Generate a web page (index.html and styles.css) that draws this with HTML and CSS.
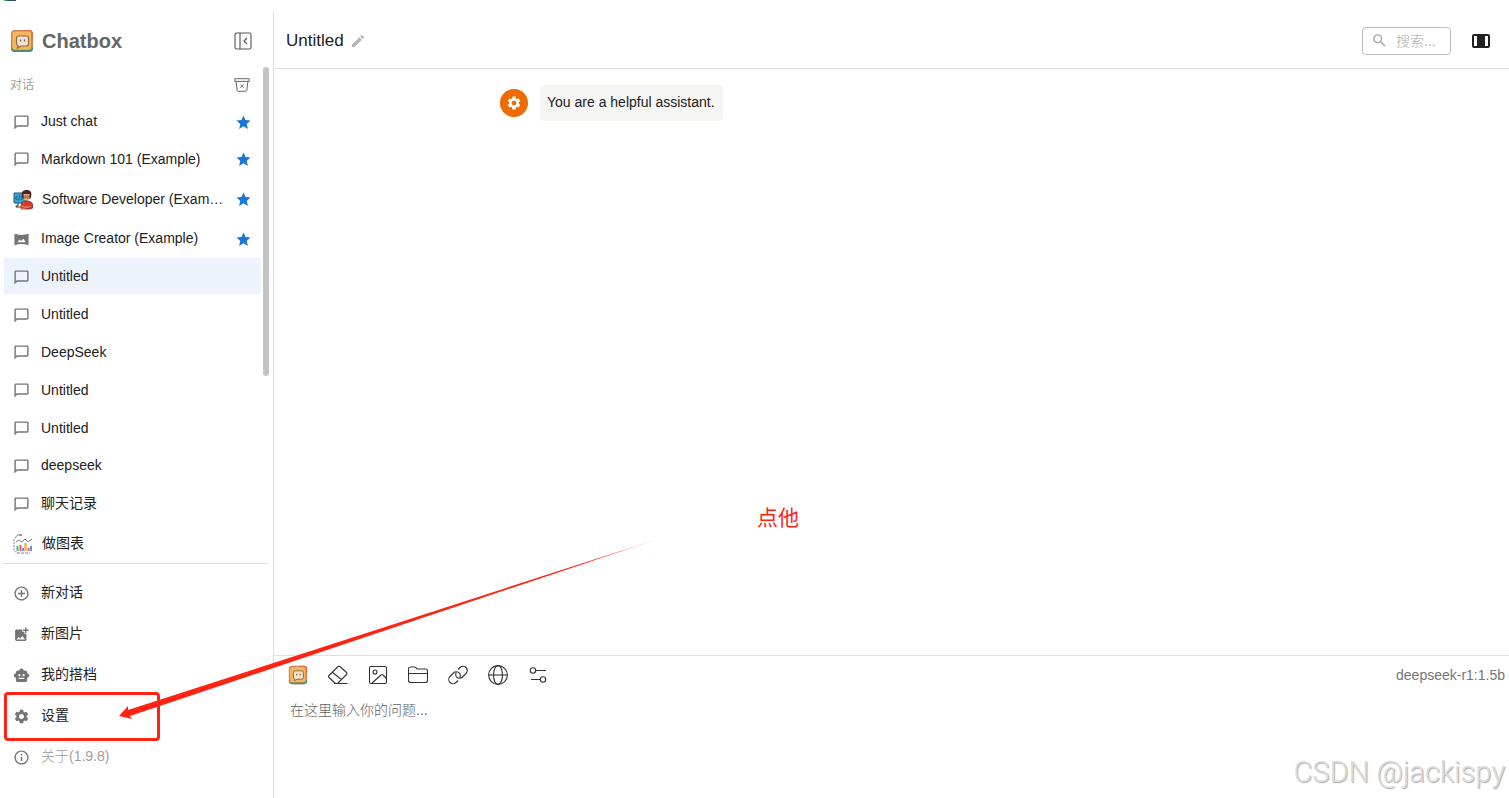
FILE: index.html
```html
<!DOCTYPE html>
<html lang="zh-CN">
<head>
    <meta charset="UTF-8">
    <meta name="viewport" content="width=device-width, initial-scale=1.0">
    <title>Chatbox</title>
    <link rel="stylesheet" href="styles.css">
</head>
<body>
<svg class="sprite" aria-hidden="true">
    <symbol id="i-chat" viewBox="0 0 24 24"><path d="M20 2H4c-1.100 0-2 .9-2 2v18l4-4h14c1.100 0 2-.9 2-2V4c0-1.100-.9-2-2-2zm0 14H5.200L4 17.200V4h16v12z"/></symbol>
    <symbol id="i-star" viewBox="0 0 24 24"><path d="M12 17.270 18.180 21l-1.640-7.030L22 9.240l-7.190-.61L12 2 9.190 8.630 2 9.240l5.460 4.730L5.820 21z"/></symbol>
    <symbol id="i-gear" viewBox="0 0 24 24"><path d="M19.140 12.940c.04-.3.060-.61.060-.94 0-.32-.02-.64-.07-.94l2.030-1.580c.18-.14.230-.41.120-.61l-1.920-3.320c-.12-.22-.37-.29-.59-.22l-2.390.96c-.5-.38-1.030-.7-1.620-.94l-.36-2.540c-.04-.24-.24-.41-.48-.41h-3.840c-.24 0-.43.170-.47.410l-.36 2.540c-.59.240-1.130.570-1.620.940l-2.390-.96c-.22-.08-.47 0-.59.220L2.740 8.870c-.12.210-.08.470.120.610l2.030 1.580c-.05.3-.09.630-.09.940s.02.640.070.940l-2.030 1.580c-.18.140-.23.410-.12.610l1.920 3.320c.12.220.370.290.590.220l2.390-.96c.5.380 1.030.7 1.620.940l.36 2.540c.05.240.240.410.480.410h3.840c.24 0 .44-.17.470-.41l.36-2.540c.59-.24 1.130-.56 1.620-.94l2.390.96c.22.080.470 0 .59-.22l1.920-3.320c.12-.22.070-.47-.12-.61l-2.010-1.580zM12 15.600c-1.980 0-3.600-1.620-3.600-3.600s1.620-3.600 3.600-3.600 3.600 1.620 3.600 3.600-1.620 3.600-3.600 3.600z"/></symbol>
    <symbol id="i-logo" viewBox="0 0 24 24">
        <rect x="1" y="1" width="22" height="22" rx="4" fill="#cf8a55"/>
        <path d="M1 18h11v5H5a4 4 0 0 1-4-4z" fill="#3d9b68"/>
        <path d="M12 18h11v1a4 4 0 0 1-4 4h-7z" fill="#2f939c"/>
        <path d="M14 1h5a4 4 0 0 1 4 4v5h-9z" fill="#dc6b4a"/>
        <rect x="2" y="2" width="19.500" height="19" rx="2.500" fill="#f6b660" stroke="#b5764a" stroke-width=".6"/>
        <path d="M8.500 7h8a2 2 0 0 1 2 2v6a2 2 0 0 1-2 2H11l-3.500 2 .5-2.500a2 2 0 0 1-1.500-2V9a2 2 0 0 1 2-2z" fill="#f3e3c8" stroke="#8a6852" stroke-width="1.200"/>
        <path d="M10.500 10.500v2M14.500 10.500v2" stroke="#735345" stroke-width="1.200"/>
    </symbol>
</svg>

<div class="window-strip"><span class="window-icon"></span></div>

<div class="app">
    <aside class="sidebar">
        <div class="brand">
            <svg class="logo"><use href="#i-logo"/></svg>
            <h1>Chatbox</h1>
            <button type="button" class="icon-btn" aria-label="收起侧边栏">
                <svg class="line-icon small" viewBox="0 0 20 20"><rect x="2" y="2" width="16" height="16" rx="1.500"/><path d="M7 2v16M14 7l-3 3 3 3"/></svg>
            </button>
        </div>
        <div class="list-head">
            <span>对话</span>
            <button type="button" class="icon-btn" aria-label="清理对话">
                <svg class="line-icon small muted" viewBox="0 0 20 20"><path d="M2 3h16v3H2zM3.500 6l1 9.500q.2 1.500 1.500 1.500h8q1.300 0 1.500-1.500l1-9.500M8.300 9.500l3.400 3.500M11.700 9.500 8.300 13"/></svg>
            </button>
        </div>
        <ul class="sessions">
            <li class="row"><svg class="row-icon"><use href="#i-chat"/></svg><span class="name">Just chat</span><svg class="star"><use href="#i-star"/></svg></li>
            <li class="row"><svg class="row-icon"><use href="#i-chat"/></svg><span class="name">Markdown 101 (Example)</span><svg class="star"><use href="#i-star"/></svg></li>
            <li class="row with-avatar">
                <svg class="avatar" viewBox="0 0 20 20">
                    <path d="M1 3h12v10H1z" fill="#35a4d4" stroke="#205b76"/>
                    <path d="M4 6 2.500 8 4 10M6.500 5.500l-1 5M8 6l1.500 2L8 10" fill="none" stroke="#174660" stroke-width=".8"/>
                    <path d="M5 13v3H3v1h6" stroke="#26323b" fill="none"/>
                    <path d="M9 6C8 2 10 0 14 0c4 0 5 3 4 7l-1 2h-7z" fill="#47241d"/>
                    <path d="M10.500 4h6V9q-3 4-6 0z" fill="#f0a880"/>
                    <path d="M10 6h3v2h-3zM14 6h3v2h-3z" fill="none" stroke="#3b2929" stroke-width=".5"/>
                    <path d="M8 19c0-6 1-8 5-8s7 1 7 6c0 2-3 2-5 2z" fill="#e3372e" stroke="#512c2b" stroke-width=".7"/>
                    <path d="m7 16 9 1.500M8 19l10-3" stroke="#da8360" stroke-width="1"/>
                </svg>
                <span class="name">Software Developer (Exam…</span><svg class="star"><use href="#i-star"/></svg>
            </li>
            <li class="row"><svg class="row-icon" viewBox="0 0 24 24"><path fill-rule="evenodd" d="M2 4c7 2 13 2 20 0v16c-7-2-13-2-20 0zm4 12h12l-3.500-5-3 3-2-2z"/></svg><span class="name">Image Creator (Example)</span><svg class="star"><use href="#i-star"/></svg></li>
            <li class="row selected"><svg class="row-icon"><use href="#i-chat"/></svg><span class="name">Untitled</span></li>
            <li class="row"><svg class="row-icon"><use href="#i-chat"/></svg><span class="name">Untitled</span></li>
            <li class="row"><svg class="row-icon"><use href="#i-chat"/></svg><span class="name">DeepSeek</span></li>
            <li class="row"><svg class="row-icon"><use href="#i-chat"/></svg><span class="name">Untitled</span></li>
            <li class="row"><svg class="row-icon"><use href="#i-chat"/></svg><span class="name">Untitled</span></li>
            <li class="row"><svg class="row-icon"><use href="#i-chat"/></svg><span class="name">deepseek</span></li>
            <li class="row"><svg class="row-icon"><use href="#i-chat"/></svg><span class="name">聊天记录</span></li>
            <li class="row with-avatar">
                <svg class="avatar" viewBox="0 0 20 20">
                    <path d="M3 3Q1 4 1 6v9q0 3 3 3" fill="none" stroke="#8183a8" stroke-dasharray="2 1"/>
                    <path d="M3 3q1-3 4-2" fill="none" stroke="#54ac80"/>
                    <path d="M6 1h3" stroke="#e95357" stroke-width="1.500"/>
                    <path d="m3 8 3-2 3 2 3-3 3 3 4-3" fill="none" stroke="#7c7ea0"/>
                    <path d="M4.500 12v5" stroke="#4bb18b" stroke-width="2"/>
                    <path d="M7.500 11v6M15.500 14v3" stroke="#ee5a80" stroke-width="2"/>
                    <path d="M10 14v3M18 12v5" stroke="#6292f0" stroke-width="2"/>
                    <path d="M12.500 9v8" stroke="#f6b04c" stroke-width="2.500"/>
                    <path d="M4 19h13" stroke="#7c7ea0" stroke-dasharray="3 1"/>
                </svg>
                <span class="name">做图表</span>
            </li>
        </ul>
        <nav class="menu">
            <button type="button" class="row"><svg class="row-icon" viewBox="0 0 24 24"><path d="M13 7h-2v4H7v2h4v4h2v-4h4v-2h-4V7zm-1-5C6.480 2 2 6.480 2 12s4.480 10 10 10 10-4.480 10-10S17.520 2 12 2zm0 18c-4.410 0-8-3.590-8-8s3.590-8 8-8 8 3.590 8 8-3.590 8-8 8z"/></svg><span>新对话</span></button>
            <button type="button" class="row"><svg class="row-icon" viewBox="0 0 24 24"><path d="M19 7v2.990s-1.990.010-2 0V7h-3s.010-1.990 0-2h3V2h2v3h3v2h-3zm-3 4V8h-3V5H5c-1.100 0-2 .9-2 2v12c0 1.100.9 2 2 2h12c1.100 0 2-.9 2-2v-8h-3zM5 19l3-4 2 3 3-4 4 5H5z"/></svg><span>新图片</span></button>
            <button type="button" class="row"><svg class="row-icon" viewBox="0 0 24 24"><path fill-rule="evenodd" d="M12 2a3 3 0 0 1 3 3h2a3 3 0 0 1 3 3v1a3 3 0 0 1 0 6v4a2 2 0 0 1-2 2H6a2 2 0 0 1-2-2v-4a3 3 0 0 1 0-6V8a3 3 0 0 1 3-3h2a3 3 0 0 1 3-3zM9 10a1.500 1.500 0 1 0 0 3 1.500 1.500 0 0 0 0-3zm6 0a1.500 1.500 0 1 0 0 3 1.500 1.500 0 0 0 0-3zm-7 5v2h8v-2z"/></svg><span>我的搭档</span></button>
            <button type="button" class="row"><svg class="row-icon"><use href="#i-gear"/></svg><span>设置</span></button>
            <button type="button" class="row about"><svg class="row-icon" viewBox="0 0 24 24"><path d="M11 7h2v2h-2zm0 4h2v6h-2zm1-9C6.480 2 2 6.480 2 12s4.480 10 10 10 10-4.480 10-10S17.520 2 12 2zm0 18c-4.410 0-8-3.590-8-8s3.590-8 8-8 8 3.590 8 8-3.590 8-8 8z"/></svg><span>关于(1.9.8)</span></button>
        </nav>
        <div class="scroll-thumb"></div>
    </aside>

    <main class="main">
        <header class="header">
            <h2>Untitled</h2>
            <button type="button" class="icon-btn" aria-label="编辑标题">
                <svg class="pencil" viewBox="0 0 24 24"><path d="M3 17.250V21h3.750L17.810 9.940l-3.750-3.750L3 17.250zM20.710 7.040c.39-.39.390-1.020 0-1.410l-2.340-2.340c-.39-.39-1.020-.39-1.410 0l-1.830 1.830 3.750 3.750 1.830-1.830z"/></svg>
            </button>
            <label class="search">
                <svg viewBox="0 0 24 24"><path d="M15.500 14h-.79l-.28-.27C15.410 12.590 16 11.110 16 9.500 16 5.910 13.090 3 9.500 3S3 5.910 3 9.500 5.910 16 9.500 16c1.610 0 3.090-.59 4.230-1.570l.27.280v.79l5 4.990L20.490 19l-4.990-5zm-6 0C7.010 14 5 11.990 5 9.500S7.010 5 9.500 5 14 7.010 14 9.500 11.990 14 9.500 14z"/></svg>
                <input type="text" placeholder="搜索..." aria-label="搜索">
            </label>
            <button type="button" class="icon-btn" aria-label="切换宽度">
                <svg class="width-icon" viewBox="0 0 20 20"><path fill-rule="evenodd" d="M3 3h14q2 0 2 2v10q0 2-2 2H3q-2 0-2-2V5q0-2 2-2zm0 2v10h3V5zm11 0v10h3V5z"/></svg>
            </button>
        </header>

        <section class="messages">
            <div class="message">
                <span class="role"><svg><use href="#i-gear"/></svg></span>
                <p class="bubble">You are a helpful assistant.</p>
            </div>
        </section>

        <section class="composer">
            <div class="toolbar">
                <button type="button" class="icon-btn" aria-label="Chatbox"><svg class="tool-logo"><use href="#i-logo"/></svg></button>
                <button type="button" class="icon-btn" aria-label="清空"><svg class="line-icon" viewBox="0 0 20 20"><path d="M6 18.500h13.500M7.500 18.500 1 12.500q-1-1 0-2L10 1.500q1-1 2 0l6.500 6q1 1 0 2L9.500 18.500zM4.500 7.500l9 7"/></svg></button>
                <button type="button" class="icon-btn" aria-label="图片"><svg class="line-icon" viewBox="0 0 20 20"><rect x="1.500" y="1.500" width="17" height="17" rx="1.500"/><circle cx="7" cy="7" r="2"/><path d="m4 18 9-8q1-1 2 0l3.500 3.500"/></svg></button>
                <button type="button" class="icon-btn" aria-label="文件"><svg class="line-icon" viewBox="0 0 20 20"><path d="M.5 8.500V4q0-2 2-2h4q1 0 1.500.7L9 4h8.500q2 0 2 2v9.500q0 2-2 2h-15q-2 0-2-2zh19"/></svg></button>
                <button type="button" class="icon-btn" aria-label="链接"><svg class="line-icon" viewBox="0 0 20 20"><path d="M10 15.500 8 17.500a4 4 0 0 1-6-6L5.500 8a4 4 0 0 1 6 .2q1.500 2 .2 4.300M10 4.500l2-2a4 4 0 0 1 6 6L14.500 12a4 4 0 0 1-6-.2Q7 9.800 8.300 7.500"/></svg></button>
                <button type="button" class="icon-btn" aria-label="联网"><svg class="line-icon" viewBox="0 0 20 20"><circle cx="10" cy="10" r="9.400"/><ellipse cx="10" cy="10" rx="4.500" ry="9.400"/><path d="M.6 10h18.800"/></svg></button>
                <button type="button" class="icon-btn" aria-label="参数"><svg class="line-icon" viewBox="0 0 20 20"><circle cx="5" cy="5.500" r="2.700"/><path d="M7.700 5.500H18M3 14.500h9.300"/><circle cx="15" cy="14.500" r="2.700"/></svg></button>
                <span class="model">deepseek-r1:1.5b</span>
            </div>
            <textarea placeholder="在这里输入你的问题..." aria-label="问题"></textarea>
        </section>
    </main>
</div>

<svg class="arrow" viewBox="0 0 670 200" aria-hidden="true">
    <defs>
        <linearGradient id="fade"><stop offset="0" stop-color="#ff2314"/><stop offset=".85" stop-color="#ff2314"/><stop offset="1" stop-color="#ff2314" stop-opacity=".2"/></linearGradient>
    </defs>
    <path d="M119 177 128 167 128 171 664 -2 130 177 132 180z" fill="url(#fade)"/>
</svg>
<div class="mark-box"></div>
<div class="mark-text">点他</div>
<div class="watermark">CSDN @jackispy</div>
</body>
</html>
```
FILE: styles.css
```css
* { box-sizing: border-box; }
body { margin: 0; height: 100vh; display: flex; flex-direction: column; overflow: hidden; position: relative; background: #fff; color: #212121; font: 14px/20px "Liberation Sans", "Noto Sans CJK SC", sans-serif; }
h1, h2, p, ul { margin: 0; padding: 0; }
button, input, textarea { font: inherit; color: inherit; }
button { border: none; background: none; padding: 0; cursor: pointer; }
svg { flex: none; display: block; fill: currentColor; }
.sprite { position: absolute; width: 0; height: 0; }

.window-strip { flex: none; height: 11px; padding-left: 4px; }
.window-icon { display: block; width: 12px; height: 1px; background: #34495e; border-left: 3px solid #3fa66b; }
.app { flex: 1; min-height: 0; display: flex; }

/* sidebar */
.sidebar { position: relative; flex: none; width: 274px; border-right: 1px solid #e0e0e0; display: flex; flex-direction: column; }
.brand { display: flex; align-items: center; height: 60px; padding: 0 20px 0 10px; color: #666; }
.brand h1 { flex: 1; margin-left: 8px; font-size: 20px; font-weight: bold; line-height: 24px; }
.logo { width: 24px; height: 24px; }
.icon-btn { display: flex; }
.line-icon { width: 20px; height: 20px; fill: none; stroke: #333; stroke-width: 1.1; stroke-linejoin: round; }
.line-icon.small { stroke: #555; }
.line-icon.muted { width: 18px; height: 18px; stroke: #666; }
.list-head { display: flex; align-items: center; justify-content: space-between; height: 28px; padding: 0 22px 0 10px; color: #777; font-size: 12px; font-weight: 300; }
.sessions { flex: 1; min-height: 0; margin-top: 4px; display: flex; flex-direction: column; justify-content: space-between; list-style: none; overflow: hidden; }
.row { display: flex; align-items: center; flex: none; height: 36px; padding: 0 9px; text-align: left; }
.sessions .row { margin: 0 12px 0 4px; }
.with-avatar { height: 40px; }
.row.selected { background: #ecf3fc; }
.row-icon { width: 17px; height: 17px; margin: 2px 11px 0 0; color: #757575; }
.avatar { width: 20px; height: 20px; margin: 2px 9px 0 0; }
.name { flex: 1; min-width: 0; margin-right: 8px; overflow: hidden; text-overflow: ellipsis; white-space: nowrap; }
.star { width: 17px; height: 17px; margin-top: 2px; color: #1976d2; }
.menu { flex: none; display: flex; flex-direction: column; gap: 5px; margin: 0 4px 0 2px; padding: 10px 0 24px 2px; border-top: 1px solid #e0e0e0; }
.about { color: #9e9e9e; font-weight: 300; }
.scroll-thumb { position: absolute; top: 56px; right: 4px; width: 6px; height: 309px; border-radius: 3px; background: #c4c4c4; }

/* main column */
.main { flex: 1; min-width: 0; display: flex; flex-direction: column; }
.header { flex: none; display: flex; align-items: center; height: 58px; padding: 2px 18px 0 12px; border-bottom: 1px solid #e0e0e0; }
.header h2 { font-size: 17px; font-weight: normal; line-height: 24px; margin-right: 6px; }
.pencil { width: 16px; height: 16px; color: #b5b5b5; }
.search { display: flex; align-items: center; width: 89px; height: 28px; margin-left: auto; margin-right: 20px; padding-left: 8px; border: 1px solid #bdbdbd; border-radius: 4px; }
.search svg { width: 17px; height: 17px; color: #aaa; }
.search input { flex: 1; min-width: 0; margin-left: 8px; padding: 0; border: none; outline: none; background: none; font-weight: 300; }
.search input::placeholder { color: #aaa; }
.width-icon { width: 20px; height: 20px; }
.messages { flex: 1; min-height: 0; padding-top: 16px; }
.message { display: flex; align-items: center; max-width: 783px; margin: 0 auto; }
.role { display: flex; align-items: center; justify-content: center; width: 28px; height: 28px; border-radius: 50%; background: #ed6c02; color: #fff; }
.role svg { width: 16px; height: 16px; }
.bubble { margin-left: 12px; padding: 7px 8px 9px 7px; border-radius: 4px; background: #f5f5f4; }

.composer { flex: none; height: 143px; border-top: 1px solid #e0e0e0; display: flex; flex-direction: column; }
.toolbar { display: flex; align-items: center; gap: 20px; height: 38px; padding: 0 4px 0 14px; }
.tool-logo { width: 20px; height: 20px; }
.model { margin-left: auto; color: #757575; }
.composer textarea { flex: 1; margin: 6px 16px; padding: 0; border: none; outline: none; resize: none; background: none; font-weight: 300; }
.composer textarea::placeholder { color: #616161; }

/* annotations over the window */
.arrow { position: absolute; left: 0; top: 539px; width: 670px; height: 200px; overflow: visible; pointer-events: none; }
.mark-box { position: absolute; left: 4px; top: 692px; width: 156px; height: 49px; border: 3px solid #ff2314; border-radius: 4px; pointer-events: none; }
.mark-text { position: absolute; left: 757px; top: 503px; font-size: 21px; line-height: 30px; color: #ff2314; }
.watermark { position: absolute; right: 4px; bottom: 8px; font: 300 29px/36px Roboto, sans-serif; color: #ddd; text-shadow: 1px 1px 1px #aaa; }
```
